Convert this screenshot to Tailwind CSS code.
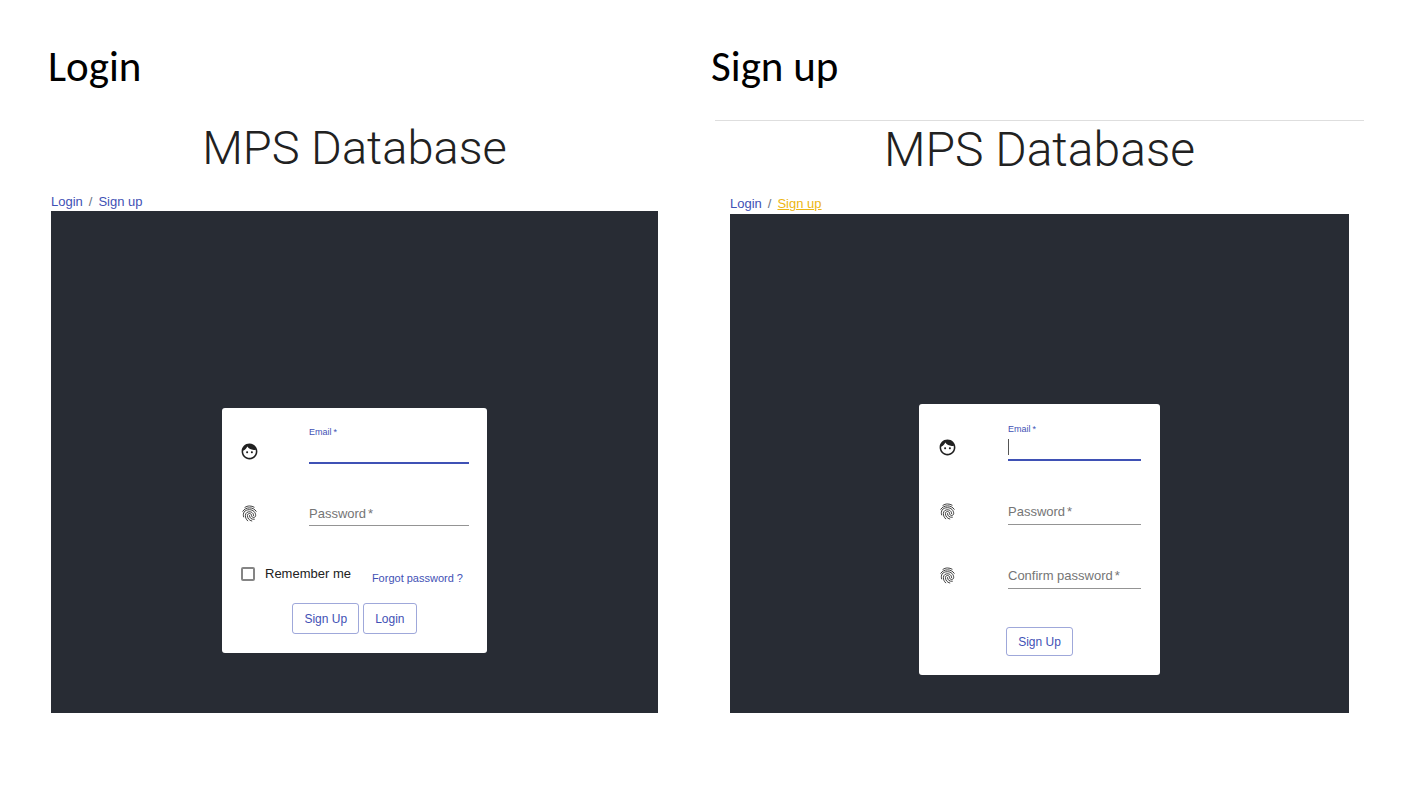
<!DOCTYPE html>
<html lang="en">
<head>
<meta charset="utf-8">
<meta name="viewport" content="width=device-width, initial-scale=1">
<title>MPS Database</title>
<script src="https://cdn.jsdelivr.net/npm/@tailwindcss/browser@4"></script>
</head>
<body class="bg-white font-['Liberation_Sans',Arial,sans-serif] text-[#212121]">
<svg class="hidden" aria-hidden="true">
  <symbol id="face" viewBox="0 0 24 24"><path d="M9 11.75c-.69 0-1.25.56-1.25 1.25s.56 1.25 1.25 1.25 1.25-.56 1.25-1.25-.56-1.25-1.25-1.25zm6 0c-.69 0-1.25.56-1.25 1.25s.56 1.25 1.25 1.25 1.25-.56 1.25-1.25-.56-1.25-1.25-1.25zM12 2C6.48 2 2 6.48 2 12s4.48 10 10 10 10-4.48 10-10S17.52 2 12 2zm0 18c-4.41 0-8-3.59-8-8 0-.29.02-.58.05-.86 2.36-1.05 4.23-2.98 5.21-5.37C11.07 8.33 14.05 10 17.42 10c.78 0 1.53-.09 2.25-.26.21.71.33 1.47.33 2.26 0 4.41-3.59 8-8 8z"/></symbol>
  <symbol id="fingerprint" viewBox="0 0 24 24"><g fill="none" stroke="#212121" stroke-width="1.1" stroke-linecap="round"><path d="M6.2 4.3C8 3.1 9.900 2.500 12 2.500s4 .6 5.800 1.500"/><path d="M3.500 9.200C5.300 6.500 8.400 4.900 12 4.900s6.700 1.600 8.500 4.300"/><path d="M4.600 16.300C3 11.500 5.600 7.200 12 7.200c4.400 0 7.800 3.200 7.800 7.300 0 3.300-5.200 3.300-5.200 0 0-3.300-5.200-3.300-5.200 0 0 3.500 2 6.200 5.500 7"/><path d="M9.700 21.300c-1.900-1.900-2.900-4-2.900-6.700 0-6.500 10.400-6.500 10.400 0"/><path d="M12 14.600c0 3.200 2.300 5 6.100 4.700"/></g></symbol>
</svg>
<main class="grid grid-cols-[610fr_653fr] gap-x-[53px] pt-[43px] pr-[37px] pl-12">

  <section>
    <h1 class="font-[Carlito,Calibri,'Open_Sans',sans-serif] text-[43px] leading-[48px] font-medium text-black">Login</h1>
    <div class="mt-[29px] pl-[3px]">
      <h2 class="text-center font-[Roboto,sans-serif] text-[47px] leading-[56px] font-light">MPS Database</h2>
      <nav aria-label="Login page links" class="mt-[18px] flex gap-[6px] text-[13px] leading-4 text-[#3f51b5]">
        <a href="#login">Login</a><span class="text-gray-500">/</span><a href="#signup">Sign up</a>
      </nav>
      <div class="mt-px flex justify-center bg-[#282c34] pt-[197px] pb-[60px]">
        <form id="login" class="w-[265px] rounded-[3px] bg-white px-[18px] pt-[18px] pb-[19px]">
          <div class="flex flex-col gap-6">
            <div class="flex items-end justify-between">
              <svg class="mb-[3px] size-[19px] fill-[#212121]"><use href="#face"/></svg>
              <div class="grid h-[38px] w-40 border-b-2 border-[#3f51b5]">
                <label for="le" class="col-start-1 row-start-1 text-[9px] leading-3 text-[#3f51b5]">Email<span class="ml-0.5">*</span></label>
                <input id="le" type="email" required class="col-start-1 row-start-1 h-5 w-full self-end bg-transparent text-[13px] outline-none">
              </div>
            </div>
            <div class="flex items-end justify-between">
              <svg class="mb-[3px] size-[19px] fill-[#212121]"><use href="#fingerprint"/></svg>
              <div class="grid h-[38px] w-40 border-b border-[#949494]">
                <label for="lp" class="col-start-1 row-start-1 mb-[3px] self-end text-[13px] leading-4 text-[#757575]">Password<span class="ml-0.5">*</span></label>
                <input id="lp" type="password" required class="col-start-1 row-start-1 h-5 w-full self-end bg-transparent text-[13px] outline-none">
              </div>
            </div>
          </div>
          <div class="mt-10 flex items-start justify-between pr-[6px]">
            <label class="flex items-center gap-[10px] pl-px text-[13px] leading-4"><input type="checkbox" class="size-[14px] appearance-none rounded-xs border-2 border-[#858585] bg-white">Remember me</label>
            <a href="#forgot" class="mt-1 text-[11px] leading-4 text-[#3f51b5]">Forgot password ?</a>
          </div>
          <div class="mt-[17px] flex justify-center gap-1">
            <button type="button" class="h-[31px] rounded-[3px] border border-[#3f51b5]/50 px-[11px] text-[12px] text-[#3f51b5]">Sign Up</button>
            <button type="submit" class="h-[31px] rounded-[3px] border border-[#3f51b5]/50 px-[11px] text-[12px] text-[#3f51b5]">Login</button>
          </div>
        </form>
      </div>
    </div>
  </section>

  <section>
    <h1 class="font-[Carlito,Calibri,'Open_Sans',sans-serif] text-[43px] leading-[48px] font-medium text-black">Sign up</h1>
    <div class="mt-[29px] ml-1 border-t border-[#dedede] px-[15px]">
      <h2 class="text-center font-[Roboto,sans-serif] text-[48px] leading-[58px] font-light">MPS Database</h2>
      <nav aria-label="Sign up page links" class="mt-[17px] flex gap-[6px] text-[13px] leading-4">
        <a href="#login" class="text-[#3f51b5]">Login</a><span class="text-gray-500">/</span><a href="#signup" class="text-[#edb612] underline">Sign up</a>
      </nav>
      <div class="mt-[2px] flex justify-center bg-[#282c34] pt-[190px] pb-[38px]">
        <form id="signup" class="w-[241px] rounded-[3px] bg-white px-[19px] pt-[19px] pb-[19px]">
          <div class="flex flex-col gap-[26px]">
            <div class="flex items-end justify-between">
              <svg class="mb-1 size-[19px] fill-[#212121]"><use href="#face"/></svg>
              <div class="grid h-[38px] w-[133px] border-b-2 border-[#3f51b5]">
                <label for="se" class="col-start-1 row-start-1 text-[9px] leading-3 text-[#3f51b5]">Email<span class="ml-0.5">*</span></label>
                <input id="se" type="email" required class="col-start-1 row-start-1 h-5 w-full self-end bg-transparent text-[13px] outline-none">
                <span class="col-start-1 row-start-1 mb-1 h-4 w-px self-end bg-[#555555]"></span>
              </div>
            </div>
            <div class="flex items-end justify-between">
              <svg class="mb-1 size-[19px] fill-[#212121]"><use href="#fingerprint"/></svg>
              <div class="grid h-[38px] w-[133px] border-b border-[#949494]">
                <label for="sp" class="col-start-1 row-start-1 mb-1 self-end text-[13px] leading-4 text-[#757575]">Password<span class="ml-0.5">*</span></label>
                <input id="sp" type="password" required class="col-start-1 row-start-1 h-5 w-full self-end bg-transparent text-[13px] outline-none">
              </div>
            </div>
            <div class="flex items-end justify-between">
              <svg class="mb-1 size-[19px] fill-[#212121]"><use href="#fingerprint"/></svg>
              <div class="grid h-[38px] w-[133px] border-b border-[#949494]">
                <label for="sc" class="col-start-1 row-start-1 mb-1 self-end text-[13px] leading-4 text-[#757575]">Confirm password<span class="ml-0.5">*</span></label>
                <input id="sc" type="password" required class="col-start-1 row-start-1 h-5 w-full self-end bg-transparent text-[13px] outline-none">
              </div>
            </div>
          </div>
          <div class="mt-[38px] flex justify-center">
            <button type="submit" class="h-[29px] rounded-[3px] border border-[#3f51b5]/50 px-[11px] text-[12px] text-[#3f51b5]">Sign Up</button>
          </div>
        </form>
      </div>
    </div>
  </section>
</main>
</body>
</html>
